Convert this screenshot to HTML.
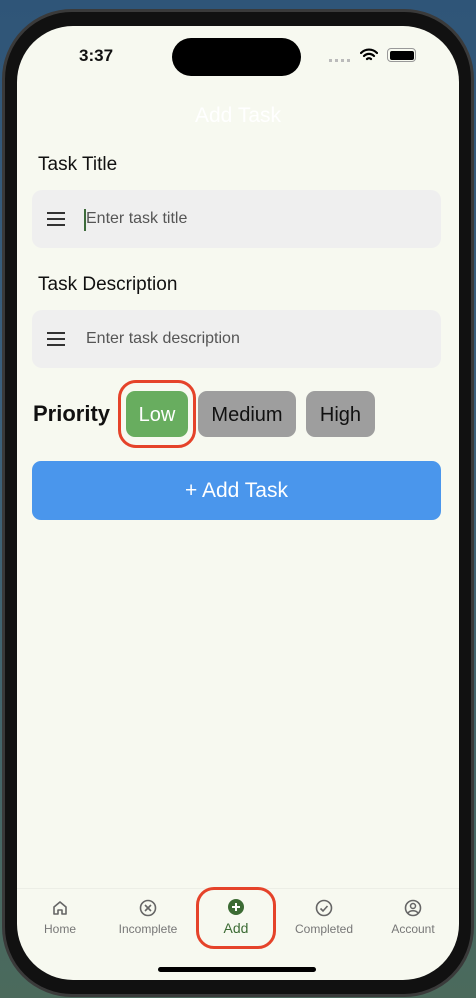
<!DOCTYPE html>
<html><head><style>
*{margin:0;padding:0;box-sizing:border-box}
body{width:476px;height:998px;overflow:hidden;background:linear-gradient(180deg,#2f5578 0%,#3a5f7c 40%,#4b6a5c 100%);font-family:"Liberation Sans",sans-serif;position:relative}
.frame{position:absolute;left:2px;top:9px;width:472px;height:988px;border-radius:70px;background:#111;border:3px solid #3a3a3a}
.screen{position:absolute;left:17px;top:26px;width:442px;height:954px;border-radius:56px;background:#f7f9f0;overflow:hidden}
.abs{position:absolute}
.island{left:155px;top:12px;width:129px;height:38px;border-radius:19px;background:#000}
.lbl{font-size:19px;color:#111}
.field{left:15px;width:409px;height:58px;background:#efefef;border-radius:10px}
.ham{left:15px;width:18px}
.ham i{display:block;height:2px;background:#333;margin-bottom:4px}
.ph{font-size:16px;color:#555;left:54px}
.chip{top:365px;height:46px;border-radius:9px;background:#9e9e9e;font-size:20px;color:#111;text-align:center;line-height:48px}
.nav{font-size:12px;color:#777;text-align:center;width:90px}
</style></head><body>
<div class="frame"></div>
<div class="screen">
<div class="abs island"></div>
<div class="abs" style="left:62px;top:20px;font-size:17px;font-weight:bold;color:#111">3:37</div>
<div class="abs" style="left:312px;top:33px;width:22px;height:3px;background:repeating-linear-gradient(90deg,#bbb 0 3px,transparent 3px 6px)"></div>
<svg class="abs" style="left:343px;top:22px" width="18" height="14" viewBox="0 0 18 14"><path d="M1 5a11 11 0 0 1 16 0M4 8a7 7 0 0 1 10 0M7 11a3 3 0 0 1 4 0" stroke="#000" stroke-width="2.2" fill="none" stroke-linecap="round"/></svg>
<div class="abs" style="left:370px;top:22px;width:29px;height:14px;border:1.5px solid #999;border-radius:4px;padding:1.5px"><div style="width:100%;height:100%;background:#000;border-radius:2px"></div></div>
<div class="abs" style="left:0;width:442px;text-align:center;top:78px;font-size:21px;color:#fff">Add Task</div>
<div class="abs lbl" style="left:21px;top:128px">Task Title</div>
<div class="abs field" style="top:164px"><div class="abs ham" style="top:22px"><i></i><i></i><i></i></div><div class="abs" style="left:52px;top:19px;width:2px;height:22px;background:#3d6b3b"></div><div class="abs ph" style="top:20px">Enter task title</div></div>
<div class="abs lbl" style="left:21px;top:248px">Task Description</div>
<div class="abs field" style="top:284px"><div class="abs ham" style="top:22px"><i></i><i></i><i></i></div><div class="abs ph" style="top:20px">Enter task description</div></div>
<div class="abs" style="left:16px;top:375px;font-size:22px;font-weight:bold;color:#111">Priority</div>
<div class="abs" style="left:101px;top:354px;width:78px;height:68px;border:3px solid #e5432a;border-radius:18px"></div>
<div class="abs chip" style="left:109px;width:62px;background:#68ad5f;color:#fff">Low</div>
<div class="abs chip" style="left:181px;width:98px">Medium</div>
<div class="abs chip" style="left:289px;width:69px">High</div>
<div class="abs" style="left:15px;top:435px;width:409px;height:59px;background:#4a96ec;border-radius:9px;color:#fff;font-size:21px;text-align:center;line-height:60px">+ Add Task</div>
<div class="abs" style="left:0;top:862px;width:442px;height:1px;background:#eceee6"></div>
<svg class="abs" style="left:35px;top:874px" width="16" height="16" viewBox="0 0 16 16"><path d="M2 7L8 2l6 5v7H10v-4H6v4H2z" stroke="#666" stroke-width="1.6" fill="none" stroke-linejoin="round"/></svg>
<div class="abs nav" style="left:-2px;top:896px">Home</div>
<svg class="abs" style="left:122px;top:873px" width="18" height="18" viewBox="0 0 18 18"><circle cx="9" cy="9" r="7.5" stroke="#666" stroke-width="1.6" fill="none"/><path d="M6 6l6 6M12 6l-6 6" stroke="#666" stroke-width="1.6"/></svg>
<div class="abs nav" style="left:86px;top:896px">Incomplete</div>
<div class="abs" style="left:179px;top:861px;width:80px;height:62px;border:3px solid #e5432a;border-radius:18px"></div>
<svg class="abs" style="left:211px;top:873px" width="16" height="16" viewBox="0 0 16 16"><circle cx="8" cy="8" r="8" fill="#3c6b34"/><path d="M8 4v8M4 8h8" stroke="#fff" stroke-width="2"/></svg>
<div class="abs nav" style="left:174px;top:894px;font-size:14px;color:#3c6b34">Add</div>
<svg class="abs" style="left:298px;top:873px" width="18" height="18" viewBox="0 0 18 18"><circle cx="9" cy="9" r="7.5" stroke="#666" stroke-width="1.6" fill="none"/><path d="M5.5 9.5l2.5 2.5 4.5-5" stroke="#666" stroke-width="1.6" fill="none"/></svg>
<div class="abs nav" style="left:262px;top:896px">Completed</div>
<svg class="abs" style="left:387px;top:873px" width="18" height="18" viewBox="0 0 18 18"><circle cx="9" cy="9" r="7.5" stroke="#666" stroke-width="1.6" fill="none"/><circle cx="9" cy="7" r="2.5" stroke="#666" stroke-width="1.5" fill="none"/><path d="M4 14c2-3 8-3 10 0" stroke="#666" stroke-width="1.5" fill="none"/></svg>
<div class="abs nav" style="left:351px;top:896px">Account</div>
<div class="abs" style="left:141px;top:941px;width:158px;height:5px;border-radius:3px;background:#000"></div>
</div>
</body></html>
